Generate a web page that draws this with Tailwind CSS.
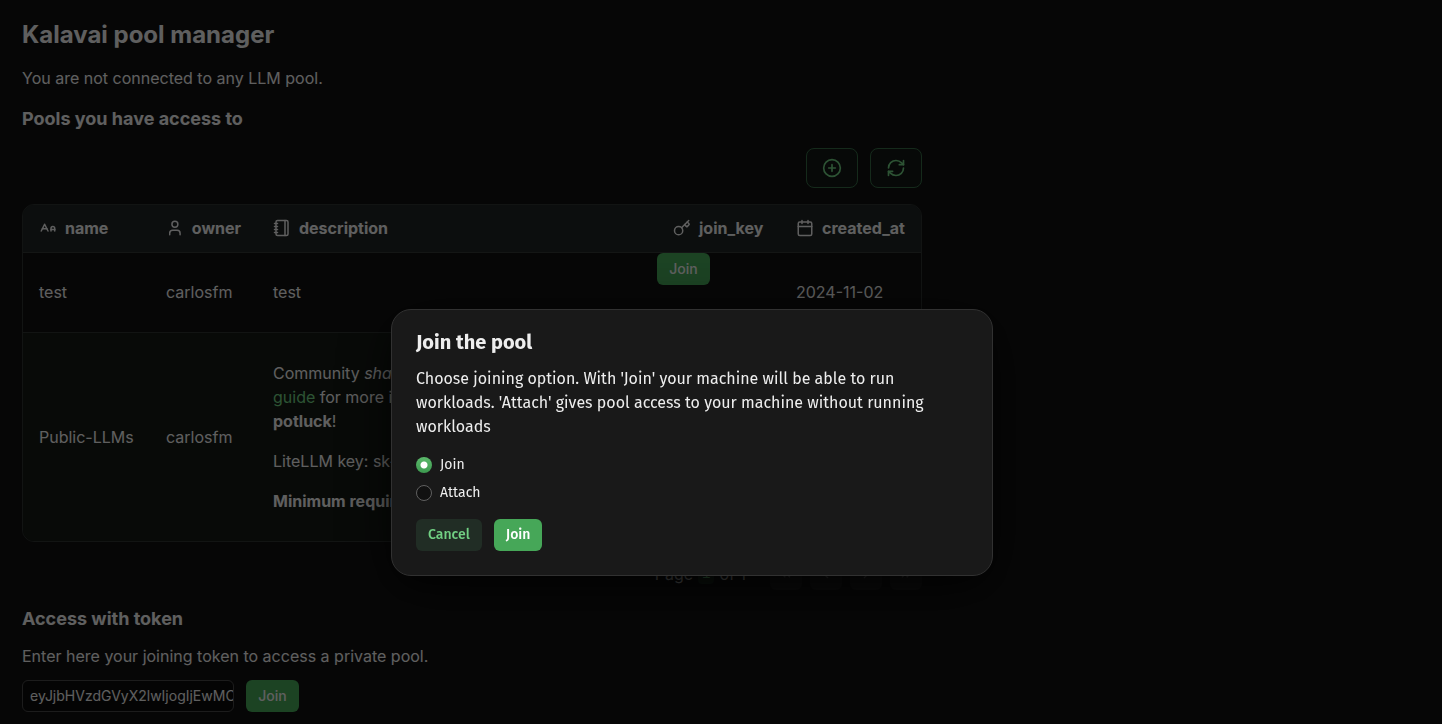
<!DOCTYPE html>
<html lang="en">
<head>
<meta charset="utf-8">
<meta name="viewport" content="width=device-width, initial-scale=1">
<title>Kalavai pool manager</title>
<script src="https://cdn.jsdelivr.net/npm/@tailwindcss/browser@4"></script>
</head>
<body class="min-h-screen bg-[#111111] font-['Inter',sans-serif] text-base text-[#eeeeee]">
<main class="flex max-w-[944px] flex-col px-[22px] pt-5 pb-3">
  <h1 class="text-2xl leading-[30px] font-bold">Kalavai pool manager</h1>
  <p class="mt-4">You are not connected to any LLM pool.</p>
  <h2 class="mt-4 text-lg leading-[26px] font-bold">Pools you have access to</h2>

  <div class="mt-4 flex justify-end gap-3 text-[#71d083]">
    <button aria-label="Create pool" class="flex h-10 w-13 items-center justify-center rounded-lg border border-[#356a45] bg-[#121815]">
      <svg class="size-5" viewBox="0 0 24 24" fill="none" stroke="currentColor" stroke-width="2" stroke-linecap="round" stroke-linejoin="round"><circle cx="12" cy="12" r="10"/><path d="M8 12h8M12 8v8"/></svg>
    </button>
    <button aria-label="Refresh" class="flex h-10 w-13 items-center justify-center rounded-lg border border-[#356a45] bg-[#121815]">
      <svg class="size-5" viewBox="0 0 24 24" fill="none" stroke="currentColor" stroke-width="2" stroke-linecap="round" stroke-linejoin="round"><path d="M3 12a9 9 0 0 1 9-9 9.75 9.75 0 0 1 6.74 2.74L21 8"/><path d="M21 3v5h-5"/><path d="M21 12a9 9 0 0 1-9 9 9.75 9.75 0 0 1-6.74-2.74L3 16"/><path d="M8 16H3v5"/></svg>
    </button>
  </div>

  <div class="mt-4 overflow-hidden rounded-xl border border-[#2e3331]">
    <table class="w-full table-fixed border-collapse text-left">
      <colgroup><col class="w-[127px]"><col class="w-[107px]"><col><col class="w-[123px]"><col class="w-[141px]"></colgroup>
      <thead class="bg-[#202524]">
        <tr class="h-[47px] border-b border-[#333836]">
          <th class="px-4"><span class="flex items-center gap-2"><svg class="size-[18px]" viewBox="0 0 24 24" fill="none" stroke="currentColor" stroke-width="2" stroke-linecap="round" stroke-linejoin="round"><path d="M21 14h-5"/><path d="M16 16v-3.5a2.5 2.5 0 0 1 5 0V16"/><path d="M4.5 13h6"/><path d="m3 16 4.5-9 4.5 9"/></svg>name</span></th>
          <th class="px-4"><span class="flex items-center gap-2"><svg class="size-[18px]" viewBox="0 0 24 24" fill="none" stroke="currentColor" stroke-width="2" stroke-linecap="round" stroke-linejoin="round"><path d="M19 21v-2a4 4 0 0 0-4-4H9a4 4 0 0 0-4 4v2"/><circle cx="12" cy="7" r="4"/></svg>owner</span></th>
          <th class="px-4"><span class="flex items-center gap-2"><svg class="size-[18px]" viewBox="0 0 24 24" fill="none" stroke="currentColor" stroke-width="2" stroke-linecap="round" stroke-linejoin="round"><path d="M2 6h4M2 10h4M2 14h4M2 18h4"/><rect width="16" height="20" x="4" y="2" rx="2"/><path d="M16 2v20"/></svg>description</span></th>
          <th class="px-4"><span class="flex items-center gap-2"><svg class="size-[18px]" viewBox="0 0 24 24" fill="none" stroke="currentColor" stroke-width="2" stroke-linecap="round" stroke-linejoin="round"><path d="m15.5 7.5 2.3 2.3a1 1 0 0 0 1.4 0l2.1-2.1a1 1 0 0 0 0-1.4L19 4"/><path d="m21 2-9.6 9.6"/><circle cx="7.5" cy="15.5" r="5.5"/></svg>join_key</span></th>
          <th class="px-4"><span class="flex items-center gap-2"><svg class="size-[18px]" viewBox="0 0 24 24" fill="none" stroke="currentColor" stroke-width="2" stroke-linecap="round" stroke-linejoin="round"><path d="M8 2v4M16 2v4"/><rect width="18" height="18" x="3" y="4" rx="2"/><path d="M3 10h18"/></svg>created_at</span></th>
        </tr>
      </thead>
      <tbody>
        <tr class="h-20 border-b border-[#2e3331]">
          <td class="px-4">test</td>
          <td class="px-4">carlosfm</td>
          <td class="px-4">test</td>
          <td class="align-top"><button class="block h-8 w-[53px] rounded-md bg-[#46a758] text-sm font-medium">Join</button></td>
          <td class="px-4">2024-11-02</td>
        </tr>
        <tr class="bg-[#141914]">
          <td class="px-4">Public-LLMs</td>
          <td class="px-4">carlosfm</td>
          <td class="px-4 py-7">
            <p>Community <em>shared</em> pool. Check out our<br><a href="#" class="text-[#71d083]">guide</a> for more information on the LLM<br><strong>potluck</strong>!</p>
            <p class="mt-4">LiteLLM key: sk-public</p>
            <p class="mt-4 font-bold">Minimum requirements</p>
          </td>
          <td class="align-top"><button class="block h-8 w-[53px] rounded-md bg-[#46a758] text-sm font-medium">Join</button></td>
          <td class="px-4">2024-11-02</td>
        </tr>
      </tbody>
    </table>
  </div>

  <div class="mt-4 flex items-center justify-end gap-2 text-[#b4b4b4]">
    <p class="mr-4 flex items-center gap-[5px]"><span>Page</span><span class="rounded bg-[#1b2a1e] px-1 font-['Liberation_Mono',monospace] text-sm text-[#71d083]">1</span><span>of 1</span></p>
    <button aria-label="First page" class="flex size-8 items-center justify-center rounded-md bg-[#1c1c1c] text-[#606060]"><svg class="size-4" viewBox="0 0 24 24" fill="none" stroke="currentColor" stroke-width="2"><path d="m11 17-5-5 5-5M18 17l-5-5 5-5"/></svg></button>
    <button aria-label="Previous page" class="flex size-8 items-center justify-center rounded-md bg-[#1c1c1c] text-[#606060]"><svg class="size-4" viewBox="0 0 24 24" fill="none" stroke="currentColor" stroke-width="2"><path d="m15 18-6-6 6-6"/></svg></button>
    <button aria-label="Next page" class="flex size-8 items-center justify-center rounded-md bg-[#1c1c1c] text-[#606060]"><svg class="size-4" viewBox="0 0 24 24" fill="none" stroke="currentColor" stroke-width="2"><path d="m9 18 6-6-6-6"/></svg></button>
    <button aria-label="Last page" class="flex size-8 items-center justify-center rounded-md bg-[#1c1c1c] text-[#606060]"><svg class="size-4" viewBox="0 0 24 24" fill="none" stroke="currentColor" stroke-width="2"><path d="m6 17 5-5-5-5M13 17l5-5-5-5"/></svg></button>
  </div>

  <h2 class="mt-4 text-lg leading-[26px] font-bold">Access with token</h2>
  <label for="token" class="mt-3">Enter here your joining token to access a private pool.</label>
  <div class="mt-3 flex gap-3">
    <input id="token" type="text" value="eyJjbHVzdGVyX2lwIjogIjEwMC4xMC4wLjki" class="h-8 w-[212px] rounded-md border border-[#484848] bg-[#0c0c0c] pl-[7px] text-sm">
    <button class="h-8 w-[53px] rounded-md bg-[#46a758] text-sm font-medium">Join</button>
  </div>
</main>

<div class="fixed inset-0 flex items-start justify-center bg-black/60 pt-[309px] pr-[58px]">
  <section role="dialog" aria-modal="true" aria-labelledby="dialog-title" class="w-full max-w-[602px] rounded-[20px] border border-[#313131] bg-[#191919] px-6 pt-[18px] pb-6 font-['Fira_Sans','Noto_Sans',sans-serif] shadow-[0_12px_60px_rgba(0,0,0,0.6),0_12px_32px_-16px_rgba(0,0,0,0.9)]">
    <h2 id="dialog-title" class="text-xl leading-7 font-bold">Join the pool</h2>
    <p class="mt-[11px]">Choose joining option. With 'Join' your machine will be able to run workloads. 'Attach' gives pool access to your machine without running workloads</p>
    <div role="radiogroup" aria-label="Joining option" class="mt-4 flex flex-col gap-2 text-sm">
      <label class="flex items-center gap-2"><input type="radio" name="mode" checked class="size-4 appearance-none rounded-full border border-[#606060] bg-[#111111] checked:border-0 checked:bg-[radial-gradient(circle,#fff_3px,transparent_4px),linear-gradient(#5bb96b,#3d9a50)]">Join</label>
      <label class="flex items-center gap-2"><input type="radio" name="mode" class="size-4 appearance-none rounded-full border border-[#606060] bg-[#111111] checked:border-0 checked:bg-[radial-gradient(circle,#fff_3px,transparent_4px),linear-gradient(#5bb96b,#3d9a50)]">Attach</label>
    </div>
    <div class="mt-4 flex gap-3 text-sm font-medium">
      <button class="h-8 rounded-md bg-[#212d25] px-3 text-[#71d083]">Cancel</button>
      <button class="h-8 rounded-md bg-[#46a758] px-3 text-white">Join</button>
    </div>
  </section>
</div>
</body>
</html>
